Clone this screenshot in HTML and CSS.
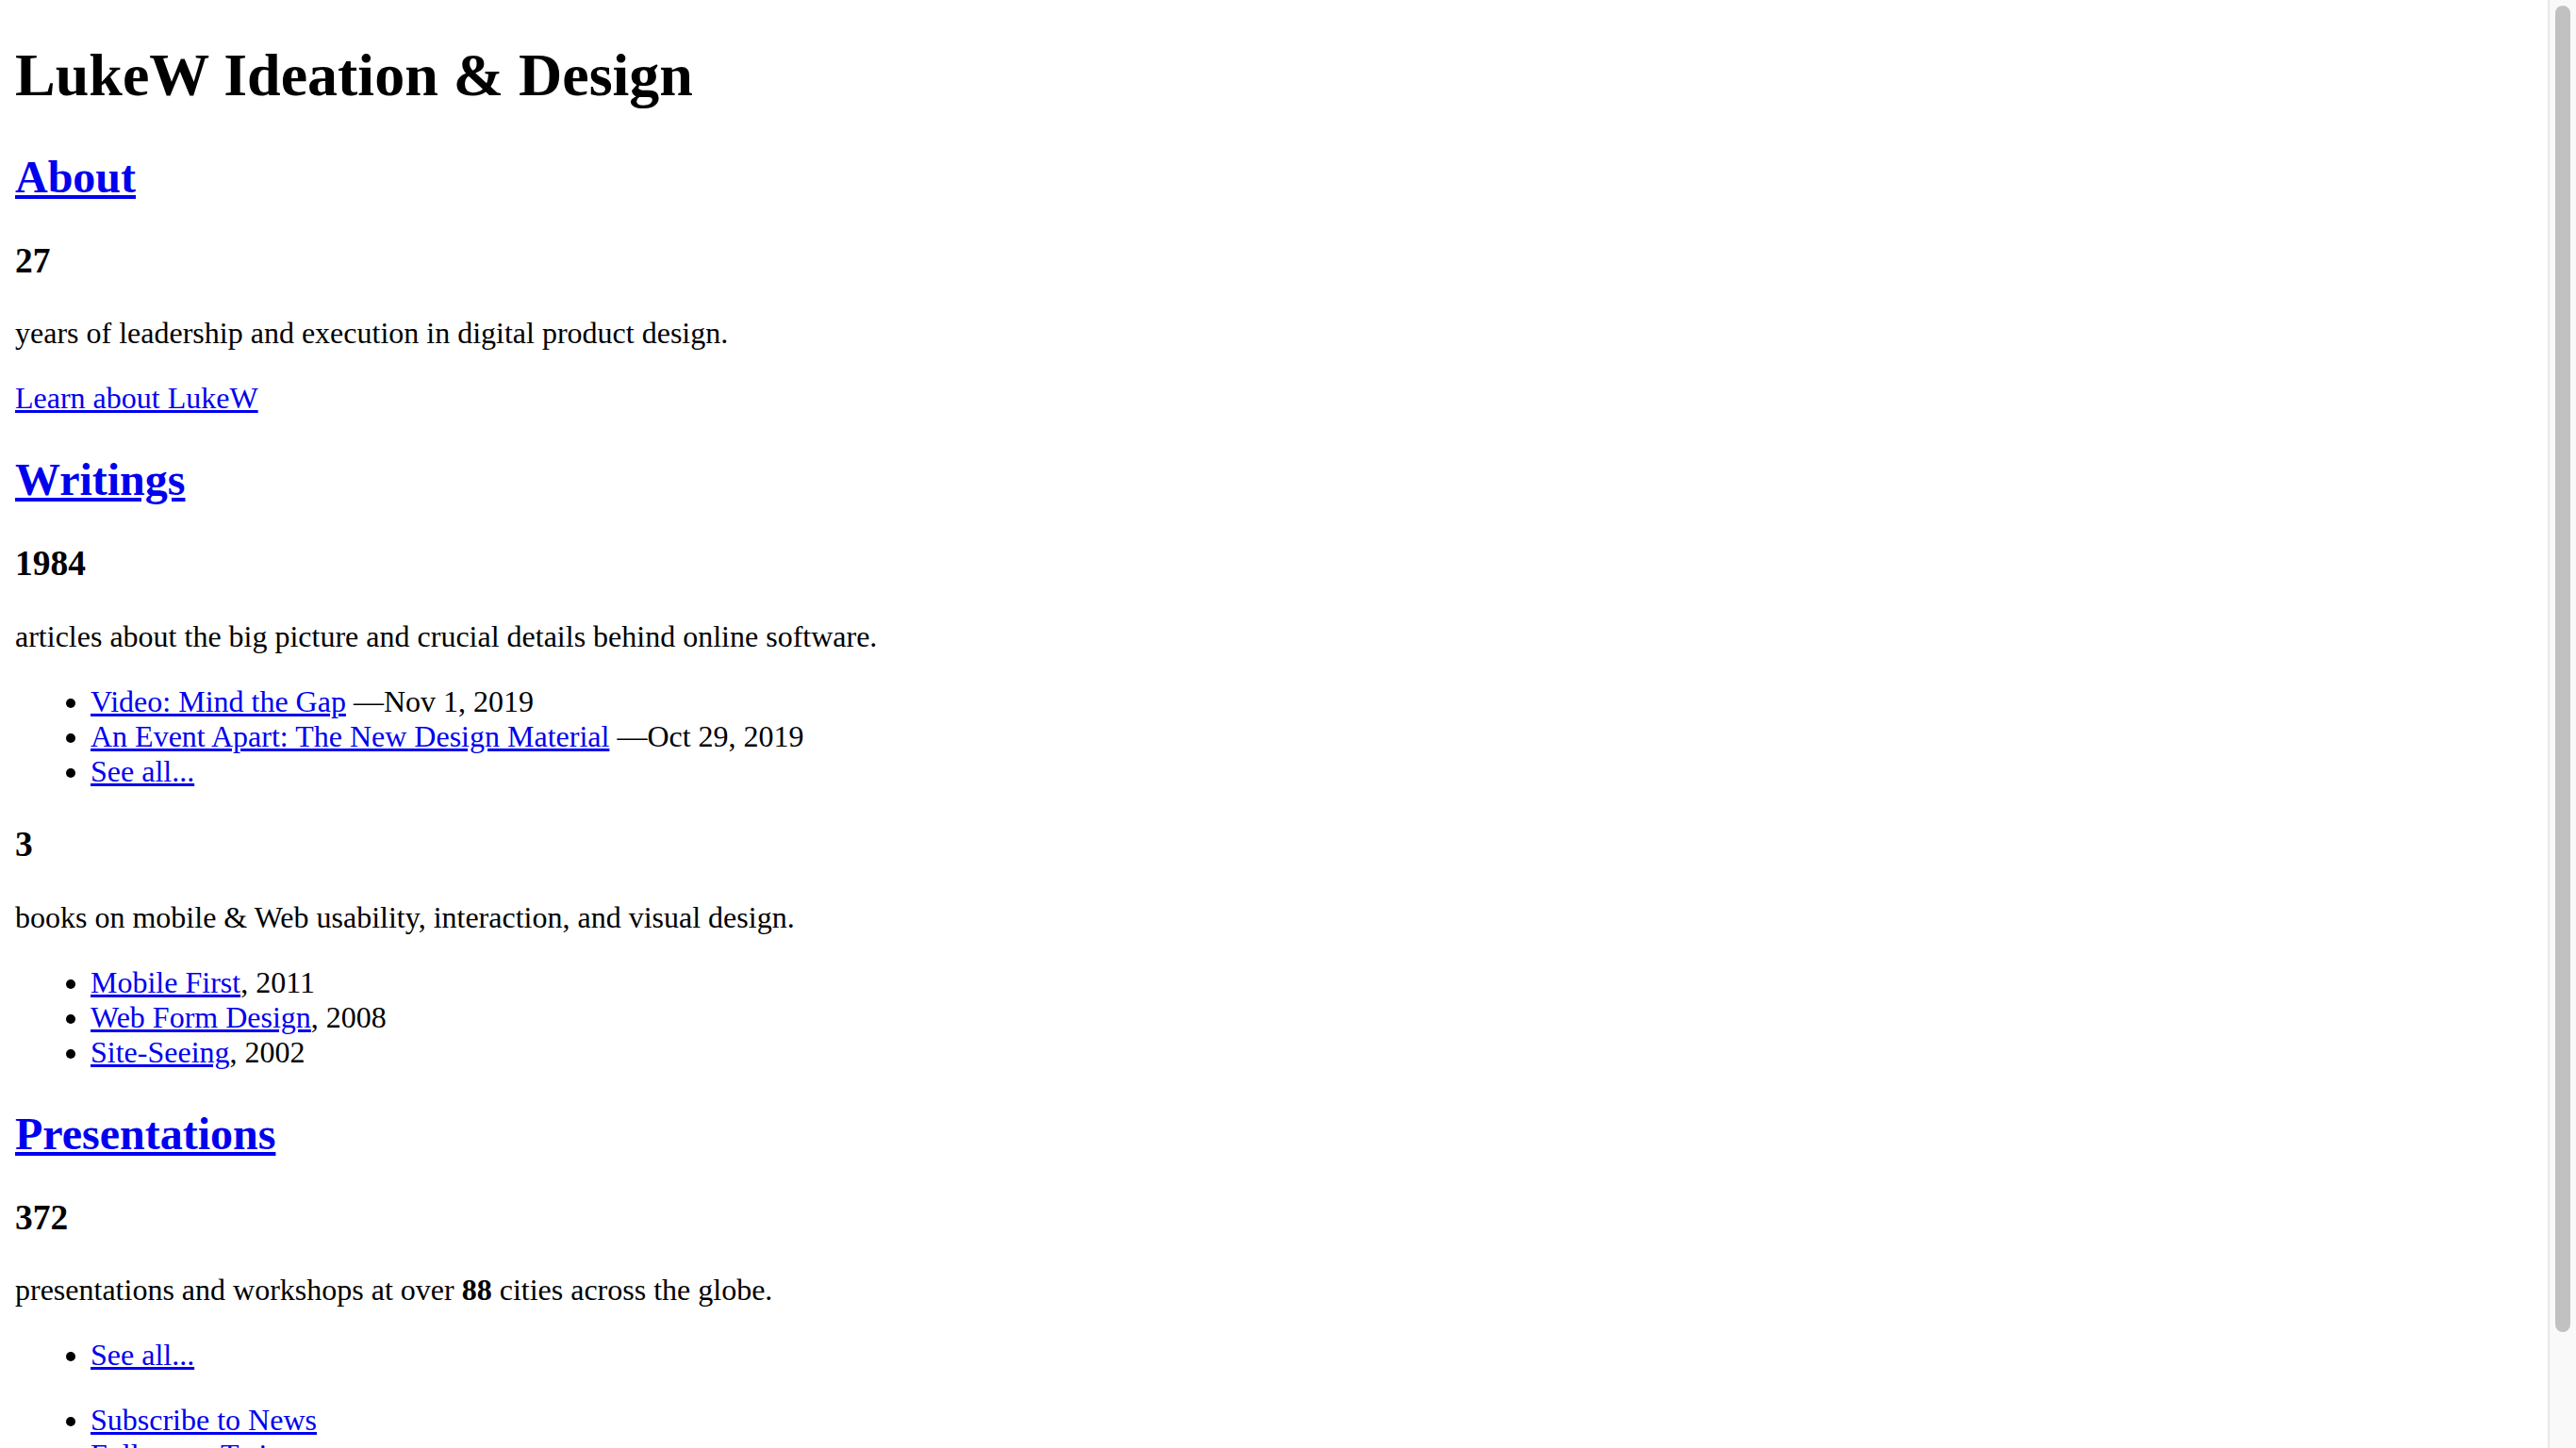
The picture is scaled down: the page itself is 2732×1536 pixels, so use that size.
FILE: index.html
```html
<!DOCTYPE html>
<html lang="en">
<head>
<meta charset="utf-8">
<title>LukeW Ideation &amp; Design</title>
<link rel="stylesheet" href="styles.css">
</head>
<body class="page">
<h1 class="title">LukeW Ideation &amp; Design</h1>

<h2 class="section-title"><a class="link" href="#">About</a></h2>
<h3 class="stat">27</h3>
<p class="text">years of leadership and execution in digital product design.</p>
<p class="text"><a class="link" href="#">Learn about LukeW</a></p>

<h2 class="section-title"><a class="link" href="#">Writings</a></h2>
<h3 class="stat">1984</h3>
<p class="text">articles about the big picture and crucial details behind online software.</p>
<ul class="list">
<li><a class="link" href="#">Video: Mind the Gap</a> &mdash;Nov 1, 2019</li>
<li><a class="link" href="#">An Event Apart: The New Design Material</a> &mdash;Oct 29, 2019</li>
<li><a class="link" href="#">See all...</a></li>
</ul>
<h3 class="stat">3</h3>
<p class="text">books on mobile &amp; Web usability, interaction, and visual design.</p>
<ul class="list">
<li><a class="link" href="#">Mobile First</a>, 2011</li>
<li><a class="link" href="#">Web Form Design</a>, 2008</li>
<li><a class="link" href="#">Site-Seeing</a>, 2002</li>
</ul>

<h2 class="section-title"><a class="link" href="#">Presentations</a></h2>
<h3 class="stat">372</h3>
<p class="text">presentations and workshops at over <strong>88</strong> cities across the globe.</p>
<ul class="list">
<li><a class="link" href="#">See all...</a></li>
</ul>

<ul class="list">
<li><a class="link" href="#">Subscribe to News</a></li>
<li><a class="link" href="#">Follow on Twitter</a></li>
<li><a class="link" href="#">Contact</a></li>
</ul>

<div class="scrollbar" aria-hidden="true"><div class="scrollbar-thumb"></div></div>
</body>
</html>
```
FILE: styles.css
```css
html {
  background: #fff;
}
.page {
  margin: 16px;
  font-family: "Liberation Serif", "Times New Roman", serif;
  font-size: 32px;
  color: #000;
}
.title {
  font-size: 64px;
  margin: 27px 0 43px;
  font-weight: bold;
}
.section-title {
  font-size: 48px;
  margin: 40px 0;
  font-weight: bold;
}
.stat {
  font-size: 37.44px;
  margin: 37.44px 0;
  font-weight: bold;
}
.text {
  margin: 32px 0;
}
.list {
  margin: 32px 0;
  padding-left: 80px;
}
.link {
  color: #0000ee;
  text-decoration: underline;
}
.scrollbar {
  position: fixed;
  top: 0;
  right: 0;
  width: 28px;
  height: 100vh;
  background: #f9f9f9;
  border-left: 2px solid #e8e8e8;
  box-sizing: content-box;
}
.scrollbar-thumb {
  margin: 6px 4px 0 6px;
  width: 16px;
  height: 1407px;
  border-radius: 8px;
  background: #c1c1c1;
}
```
